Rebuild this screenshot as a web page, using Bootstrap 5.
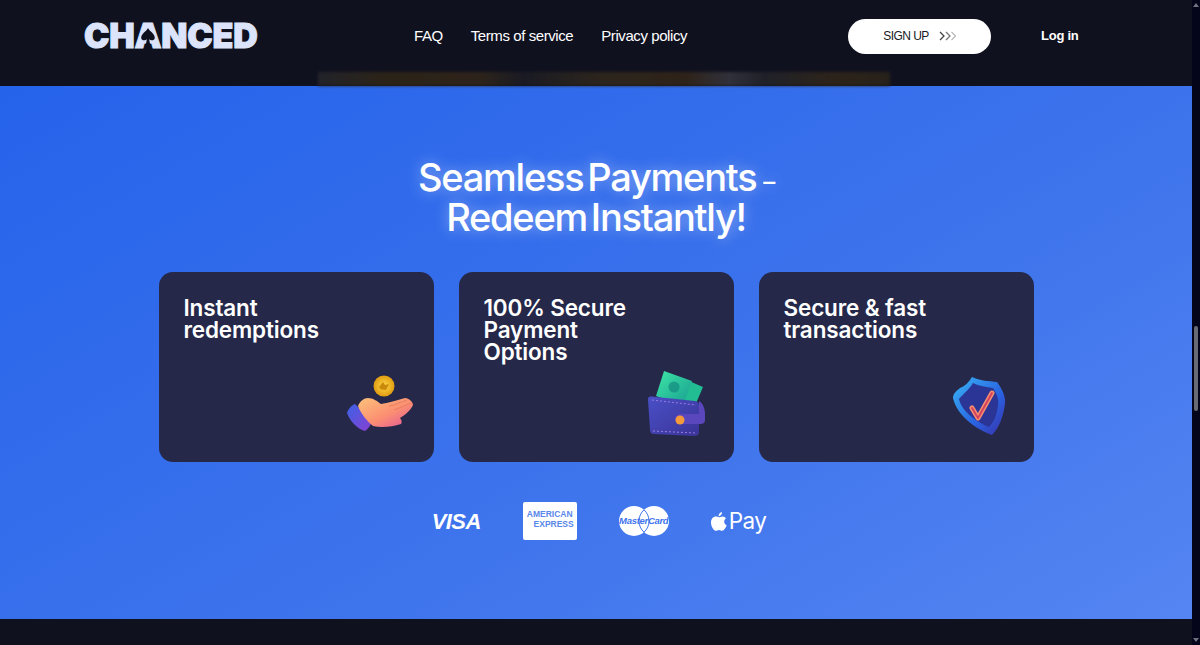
<!DOCTYPE html>
<html lang="en">
<head>
<meta charset="utf-8">
<title>Chanced</title>
<link href="https://cdn.jsdelivr.net/npm/bootstrap@5.3.0/dist/css/bootstrap.min.css" rel="stylesheet">
<style>
html,body{height:645px;overflow:hidden;background:#10111f;}
body{font-family:"Liberation Sans",Arial,sans-serif;}
.shell{height:645px;}
.main-col{width:1192px;flex:none;}
.rail{width:8px;flex:none;background:#04041a;}
.rail-up,.rail-down{width:0;height:0;border-left:3px solid transparent;border-right:3px solid transparent;margin:0 auto;}
.rail-up{border-bottom:4px solid #70737f;margin-top:3px;}
.rail-down{border-top:4px solid #70737f;margin-top:auto;margin-bottom:3px;}
.rail-thumb{width:4px;height:85px;background:#686b73;border-radius:2px;margin:319px auto 0;}
.topnav{height:72px;background:#10111f;padding-left:84px;}
.brand{width:330px;font-family:Inter,sans-serif;font-weight:900;font-size:34px;line-height:36px;color:#dbe4fb;letter-spacing:-.2px;-webkit-text-stroke:1px #dbe4fb;text-decoration:none;}
.brand-a{position:relative;display:inline-block;}
.brand-a svg{position:absolute;left:50%;top:10px;margin-left:-8px;}
.menu{gap:28px;}
.menu a{color:#fff;text-decoration:none;font-size:15px;letter-spacing:-.42px;}
.signup{width:143px;height:35px;margin-left:161px;border-radius:18px;background:#fff;color:#191a22;font-size:12px;font-weight:400;letter-spacing:-.55px;border:0;padding:0;display:flex;align-items:center;justify-content:center;gap:10px;}
.signup:hover{background:#fff;color:#191a22;}
.login{margin-left:50px;color:#fff;font-weight:700;font-size:13px;letter-spacing:-.25px;text-decoration:none;}
.strip{height:14px;background:#10111f;}
.strip-glow{width:572px;height:14px;margin-left:318px;filter:blur(1.5px);opacity:.9;background:linear-gradient(90deg,#24242b,#2f2617 12%,#31261a 28%,#1c1c24 36%,#30281c 50%,#322518 64%,#34343e 72%,#22222a 78%,#30261a 90%,#29231a);}
.pay-band{height:533px;background:linear-gradient(150deg,#2563eb 0%,#3e74ec 60%,#5585f2 100%);padding-top:71px;}
.headline{font-family:Inter,sans-serif;font-weight:500;font-size:38px;line-height:40px;letter-spacing:-1.25px;word-spacing:-5px;color:#fff;text-align:center;margin:0 0 35px;text-shadow:0 0 14px rgba(255,255,255,.45);}
.short-dash{font-size:24px;line-height:0;margin-left:3px;position:relative;top:-1px;}
.perks{gap:25px;justify-content:center;}
.perk{width:275px;height:190px;background:#252849;border-radius:14px;padding:25px 25px 0;color:#fff;}
.perk h3{font-family:Inter,sans-serif;font-weight:600;font-size:22.5px;line-height:22px;letter-spacing:-.15px;margin:0;}
.perk-art{margin-top:auto;display:flex;justify-content:flex-end;}
.methods{gap:42px;margin-top:40px;height:38px;padding-left:6px;}
.visa{font-weight:700;font-style:italic;font-size:22px;letter-spacing:-.6px;color:#fff;}
.amex{width:54px;height:38px;background:#fff;border-radius:2px;color:#5a87ea;font-size:8.5px;line-height:10px;font-weight:700;letter-spacing:0;padding:7px 3px 0;}
.amex span{display:block;text-align:center;}
.amex span+span{text-align:right;}
.mc{position:relative;width:50px;height:30px;}
.mc-text{position:absolute;left:0;right:0;top:8px;text-align:center;color:#3f74ec;font-style:italic;font-weight:700;font-size:9.5px;line-height:14px;letter-spacing:-.3px;white-space:nowrap;}
.apay{color:#fff;font-size:22.5px;line-height:28px;gap:2px;font-family:Inter,sans-serif;letter-spacing:-.6px;}
.foot{flex:1;background:#10111f;}
</style>
</head>
<body>
<div class="shell d-flex">
  <div class="main-col d-flex flex-column">
    <nav class="topnav d-flex align-items-center">
      <a class="brand d-block" href="#">CH<span class="brand-a">A<svg width="16" height="17" viewBox="0 0 14 15"><path d="M7 0C8.500 3 13 5 13 8.500 13 11 9.500 11.500 8 10L9 15H5L6 10C4.500 11.500 1 11 1 8.500 1 5 5.500 3 7 0Z" fill="#10111f"/></svg></span>NCED</a>
      <div class="menu d-flex align-items-center">
        <a href="#">FAQ</a>
        <a href="#">Terms of service</a>
        <a href="#">Privacy policy</a>
      </div>
      <button class="btn signup" type="button">SIGN UP
        <svg width="17" height="10" viewBox="0 0 17 10" fill="none" stroke-width="1.300"><path d="M1 1l4 4-4 4" stroke="#444"/><path d="M7 1l4 4-4 4" stroke="#777"/><path d="M12.500 1l4 4-4 4" stroke="#bbb"/></svg>
      </button>
      <a class="login" href="#">Log in</a>
    </nav>
    <div class="strip"><div class="strip-glow"></div></div>
    <section class="pay-band">
      <h2 class="headline">Seamless Payments <span class="short-dash">–</span><br>Redeem Instantly!</h2>
      <div class="perks d-flex">
        <div class="perk d-flex flex-column">
          <h3>Instant<br>redemptions</h3>
          <div class="perk-art">
            <svg width="70" height="62" viewBox="0 0 70 62" style="margin:0 -6px 26px 0">
              <defs>
                <linearGradient id="hand" x1="0" y1="0" x2="1" y2="1"><stop offset="0" stop-color="#fdc27a"/><stop offset=".55" stop-color="#fb8f72"/><stop offset="1" stop-color="#e0559c"/></linearGradient>
                <linearGradient id="cuff" x1="0" y1="0" x2="1" y2="1"><stop offset="0" stop-color="#3a62e6"/><stop offset="1" stop-color="#8a3fd0"/></linearGradient>
                <radialGradient id="coin"><stop offset="0" stop-color="#ffd84a"/><stop offset="1" stop-color="#e09c10"/></radialGradient>
              </defs>
              <circle cx="39" cy="12" r="10.500" fill="url(#coin)"/>
              <path d="M34 13l4-5 2 3 4-1-3 6-5-.5z" fill="#c98a0c"/>
              <path d="M2 39C3 35 7 31 10 30L27 47C26 51 23 55 20 57 12 55 5 47 2 39Z" fill="url(#cuff)"/>
              <path d="M13 32C15 27 19 24 23 24 28 24 32 27 36 30 43 29 52 26 60 24 64 24 68 28 68 31 66 36 60 41 55 44 57 46 57 49 56 50 47 53 36 54 28 52 22 47 16 40 13 32Z" fill="url(#hand)"/>
              <path d="M44 32C50 31 56 28 62 26M49 36C55 34 61 31 66 29" stroke="#e77d63" stroke-width="1" fill="none"/>
            </svg>
          </div>
        </div>
        <div class="perk d-flex flex-column">
          <h3>100% Secure<br>Payment<br>Options</h3>
          <div class="perk-art">
            <svg width="62" height="69" viewBox="0 0 62 69" style="margin:0 2px 25px 0">
              <defs>
                <linearGradient id="cash" x1="0" y1="0" x2="1" y2="1"><stop offset="0" stop-color="#3fe6a6"/><stop offset="1" stop-color="#169c90"/></linearGradient>
                <linearGradient id="wal" x1="0" y1="0" x2="1" y2="1"><stop offset="0" stop-color="#4a50c8"/><stop offset="1" stop-color="#3a3396"/></linearGradient>
              </defs>
              <path d="M44 13L58 19 49 40 36 36Z" fill="#22bd92"/>
              <path d="M19 3L47 13 38 38 11 28Z" fill="url(#cash)"/>
              <circle cx="29" cy="19" r="5.500" fill="#128a80" opacity=".7"/>
              <path d="M3 32C3 29 4 28 7 28.500L50 33C53 33.500 54 35 54 37V64C54 67 52 68 49 68L9 66C6 66 5 64 5 61Z" fill="url(#wal)"/>
              <path d="M7 32L51 37M8 63L50 65" stroke="#9a7be0" stroke-width="1" stroke-dasharray="2 2" fill="none"/>
              <path d="M54 33C58 35 60 41 60 46V52C60 55 58 56 55 56H36C32 56 30 54 30 51 30 48 32 46 36 46H54Z" fill="#5a47bd"/>
              <circle cx="35" cy="52" r="4.500" fill="#f59a3a"/>
            </svg>
          </div>
        </div>
        <div class="perk d-flex flex-column">
          <h3>Secure &amp; fast<br>transactions</h3>
          <div class="perk-art">
            <svg width="56" height="62" viewBox="0 0 56 62" style="margin:0 3px 26px 0">
              <defs>
                <linearGradient id="rim" x1="0" y1="0" x2="1" y2="1"><stop offset="0" stop-color="#38b6f5"/><stop offset=".6" stop-color="#2a62e0"/><stop offset="1" stop-color="#3a2fa8"/></linearGradient>
              </defs>
              <path d="M22 3C30 7 39 7 47 8 53 16 56 24 55 30 53 44 49 54 42 61 26 55 7 42 3 24 3 20 6 17 10 14 15 12 19 8 22 3Z" fill="url(#rim)"/>
              <path d="M23 9C29 12 36 13 43 14 47 20 49 26 48 31 47 41 44 48 39 53 27 48 12 38 9 25 13 20 19 16 23 9Z" fill="#2b3596"/>
              <path d="M22 34L28 44 42 19" stroke="#f58c70" stroke-width="5" stroke-linecap="round" stroke-linejoin="round" fill="none"/>
              <path d="M22 34L28 44 42 19" stroke="#d2405f" stroke-width="1.800" stroke-linecap="round" stroke-linejoin="round" fill="none"/>
            </svg>
          </div>
        </div>
      </div>
      <div class="methods d-flex justify-content-center align-items-center">
        <span class="visa">VISA</span>
        <div class="amex"><span>AMERICAN</span><span>EXPRESS</span></div>
        <div class="mc">
          <svg width="50" height="30" viewBox="0 0 50 30"><circle cx="15" cy="15" r="15" fill="#fff"/><circle cx="35" cy="15" r="15" fill="#fff"/><path d="M25 3.800A15 15 0 0 1 25 26.200A15 15 0 0 1 25 3.800Z" fill="none" stroke="#3f74ec" stroke-width="1"/></svg>
          <span class="mc-text">MasterCard</span>
        </div>
        <div class="apay d-flex align-items-center">
          <svg width="16" height="19" viewBox="0 0 16 19"><path d="M11 0C11.200 2.300 9.400 4.300 7.600 4.200 7.300 2.200 9.200 .2 11 0ZM8 5.200C9 5.200 10 4.400 11.600 4.400 12.800 4.500 14.100 5 15 6.300 12.300 8 12.800 12 15.700 13.300 14.800 15.700 13 18.700 11.200 18.700 10 18.700 9.400 17.900 8 17.900 6.500 17.900 5.900 18.700 4.700 18.700 2.500 18.700 0 14.500 0 10.600 0 6.800 2.400 4.500 4.600 4.500 6 4.500 7 5.200 8 5.200Z" fill="#fff"/></svg>
          <span>Pay</span>
        </div>
      </div>
    </section>
    <div class="foot"></div>
  </div>
  <aside class="rail d-flex flex-column">
    <div class="rail-up"></div>
    <div class="rail-thumb"></div>
    <div class="rail-down"></div>
  </aside>
</div>
<script src="https://cdn.jsdelivr.net/npm/bootstrap@5.3.0/dist/js/bootstrap.bundle.min.js"></script>
</body>
</html>
